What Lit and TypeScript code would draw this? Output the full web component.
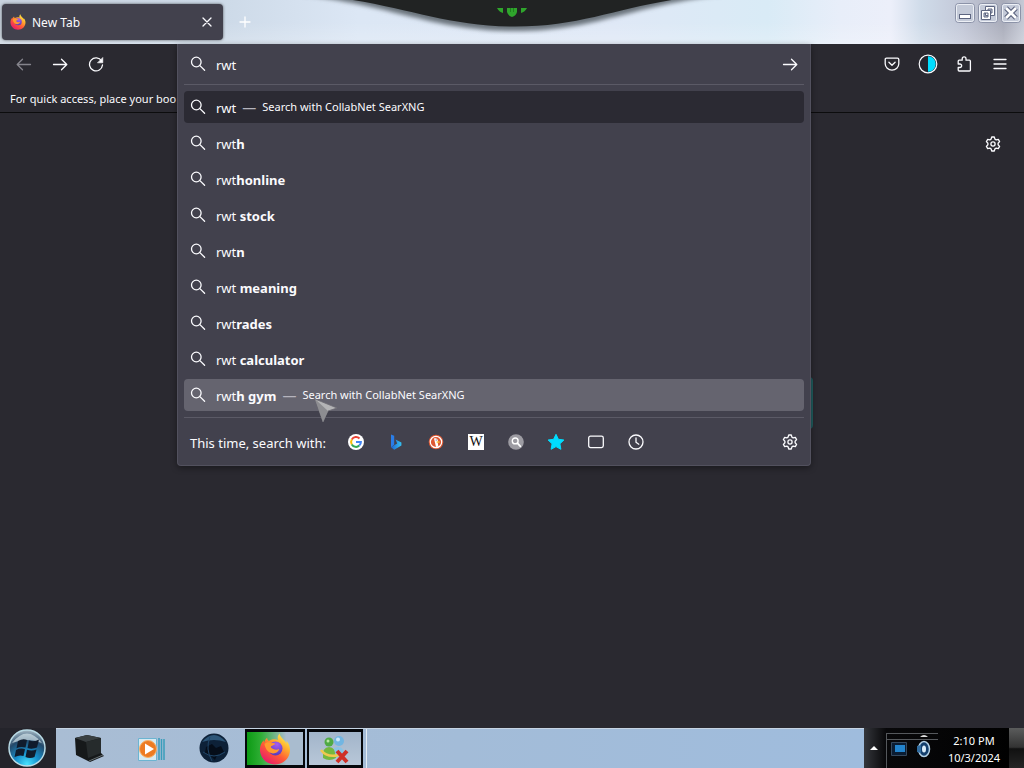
import { LitElement, html, svg, css } from "lit";
import { customElement, property, state } from "lit/decorators.js";
import { classMap } from "lit/directives/class-map.js";

const FONT = css`"Noto Sans", "Open Sans", sans-serif`;

const resetButton = css`
  *, *::before, *::after { box-sizing: border-box; }
  svg { display: block; flex: none; }
  button {
    font: inherit;
    color: inherit;
    background: none;
    border: 0;
    padding: 0;
    margin: 0;
    display: flex;
    align-items: center;
    justify-content: center;
  }
`;

const line = (body: unknown, size = 16) => html`
  <svg width=${size} height=${size} viewBox="0 0 16 16" fill="none" stroke="currentColor"
    stroke-width="1.3" stroke-linecap="round" stroke-linejoin="round" aria-hidden="true">${body}</svg>`;

const searchIcon = line(svg`<circle cx="6.3" cy="6" r="4.8"/><path d="M9.9 9.6 14.6 14.3"/>`);
const arrowRight = line(svg`<path d="M1.500 8.500h13M9.500 3.200l5.300 5.300-5.300 5.300"/>`);
const arrowLeft = line(svg`<path d="M14.500 8.500h-13M6.500 3.200 1.200 8.500l5.300 5.300"/>`);
const reload = line(svg`<path d="M13.600 5A6.500 6.500 0 1 0 14.500 9"/><path d="M14.800 1.800v5h-5z" fill="currentColor" stroke-width=".6"/>`);
const closeIcon = line(svg`<path d="M4 4l8 8M12 4l-8 8"/>`);
const plus = line(svg`<path d="M8 3v10M3 8h10"/>`);
const menuIcon = line(svg`<path d="M2 3.500h12M2 8h12M2 12.500h12"/>`);
const pocket = line(svg`<path d="M2.500 2.200h11q1.300 0 1.300 1.300v4.300a6.800 6.300 0 0 1-13.600 0V3.500q0-1.300 1.300-1.300z"/><path d="M4.900 6.300 8 9.300l3.100-3"/>`);
const puzzle = line(svg`<path d="M6.200 4.200V2.700a1.900 1.900 0 0 1 3.800 0v1.500h3.400q1 0 1 1v8.800q0 1-1 1H3.200q-1 0-1-1v-2.500h1.700a1.750 1.750 0 0 0 0-3.500H2.200V5.200q0-1 1-1z"/>`);
const gear = line(svg`<circle cx="8" cy="8" r="2.100"/><path d="M6.700 1h2.600l.6 2.100 1.300.8 2.100-.5 1.300 2.200-1.500 1.600v1.600l1.500 1.600-1.300 2.200-2.100-.5-1.300.8L9.300 15H6.700l-.6-2.100-1.300-.8-2.100.5-1.300-2.200 1.500-1.600V7.200L1.400 5.600l1.300-2.200 2.100.5 1.300-.8z"/>`);
const tabsIcon = line(svg`<rect x=".700" y="2.200" width="14.600" height="11.400" rx="1.800"/>`);
const clock = line(svg`<circle cx="8" cy="8" r="7"/><path d="M8 4v4.300l2.800 1.900"/>`);
const darkMode = html`
  <svg width="20" height="20" viewBox="0 0 20 20" aria-hidden="true">
    <circle cx="10" cy="10" r="8.800" fill="#24252e" stroke="#fbfbfe" stroke-width="1.200"/>
    <path d="M10 2.300a7.700 7.700 0 0 1 0 15.400z" fill="#00ddff"/>
  </svg>`;

const firefox = (size: number) => html`
  <svg width=${size} height=${size} viewBox="0 0 32 32" aria-hidden="true">
    <defs>
      <linearGradient id="ff" x1=".85" y1=".05" x2=".2" y2=".95">
        <stop offset="0" stop-color="#fff44f"/><stop offset=".3" stop-color="#ffb02e"/>
        <stop offset=".6" stop-color="#ff5b36"/><stop offset="1" stop-color="#e8186d"/>
      </linearGradient>
      <radialGradient id="fp" cx=".6" cy=".2" r=".9">
        <stop offset="0" stop-color="#a65cf0"/><stop offset="1" stop-color="#4737b8"/>
      </radialGradient>
    </defs>
    <path fill="url(#ff)" d="M20.500.5c-2 2.500-2.200 4.700-1.300 6.500-3.500-1.300-7-.8-9.200 1-1.500-.8-1.800-2-1.800-3.200C6.500 5.900 5.500 8 5.200 9.700 4.800 9.200 4.700 8.300 4.800 7.200 1.800 10 .6 14 1 18c.8 7.700 7.200 13.500 15 13.500 8.500 0 15-6.500 15-14.500 0-4-1.500-7-3.800-9.200.3 1 .4 2 .2 2.900C26 6.500 21.500 5.500 20.500.5z"/>
    <circle cx="16.500" cy="15.500" r="7" fill="url(#fp)"/>
    <path fill="#ff9a2e" d="M5.500 11c2-2.300 5-2.300 7-.8 1.800-.3 3 .1 3.800.6-1 1.700-4 1.500-4.500 3.400 2 2 5.500 3.500 8.500 1.500-1 4.500-7 6.500-11.300 2.600C7 16.300 5.800 13.500 5.500 11z"/>
  </svg>`;

const engineIcons = {
  google: html`<svg width="16" height="16" viewBox="0 0 16 16" aria-hidden="true">
    <circle cx="8" cy="8" r="8" fill="#fff"/>
    <g fill="none" stroke-width="2"><path stroke="#ea4335" d="M3.800 5.500A4.900 4.900 0 0 1 11.500 4.500"/>
    <path stroke="#fbbc05" d="M3.800 10.500a4.900 4.900 0 0 1 0-5"/><path stroke="#34a853" d="M11.300 11.600a4.900 4.900 0 0 1-7.500-1.100"/>
    <path stroke="#4285f4" d="M8 8h4.900a4.900 4.900 0 0 1-1.600 3.600"/></g></svg>`,
  bing: html`<svg width="16" height="16" viewBox="0 0 16 16" aria-hidden="true">
    <defs><linearGradient id="bg" x1="0" y1="0" x2="1" y2="0"><stop offset="0" stop-color="#1b62d0"/><stop offset="1" stop-color="#35c1f1"/></linearGradient></defs>
    <path fill="#2a7de8" d="M3 .5 6.200 1.700v9.100L3 13.200z"/><path fill="url(#bg)" d="M3 13.200 7.400 10.500 9.200 9.600 7.500 5.600l5.900 2.800v3.200L6.200 15.700z"/></svg>`,
  duck: html`<svg width="16" height="16" viewBox="0 0 16 16" aria-hidden="true">
    <circle cx="8" cy="8" r="7.300" fill="#de5833"/><circle cx="8" cy="8" r="5.700" fill="none" stroke="#fff" stroke-width="1.200"/>
    <path fill="#fff" d="M6 4.600c1.800-1 4 .2 4 2.600L9.600 8l.8 4.600-2.400.5z"/><path fill="#fc3" d="M8.600 7.400h3v1.300h-3z"/><circle cx="8.200" cy="6" r=".6" fill="#2d4f8e"/></svg>`,
  wiki: html`<span class="wiki" aria-hidden="true">W</span>`,
  searx: html`<svg width="16" height="16" viewBox="0 0 16 16" aria-hidden="true">
    <circle cx="8" cy="8" r="7.800" fill="#9d9ca3"/><circle cx="7.200" cy="6.900" r="2.900" fill="none" stroke="#fff" stroke-width="1.400"/>
    <path d="m9.400 9.200 3 3.100" stroke="#fff" stroke-width="1.700" stroke-linecap="round"/></svg>`,
  star: html`<svg width="18" height="18" viewBox="0 0 18 18" aria-hidden="true">
    <path fill="#00ddff" stroke="#00ddff" stroke-linejoin="round" d="m9 1.300 2.400 5 5.500.7-4 3.800 1 5.500L9 13.600l-4.900 2.700 1-5.500-4-3.800 5.500-.7z"/></svg>`,
  tabs: tabsIcon,
  clock,
};

interface Suggestion { typed: string; rest: string; action?: boolean }

const SUGGESTIONS: Suggestion[] = [
  { typed: "rwt", rest: "", action: true },
  { typed: "rwt", rest: "h" },
  { typed: "rwt", rest: "honline" },
  { typed: "rwt", rest: " stock" },
  { typed: "rwt", rest: "n" },
  { typed: "rwt", rest: " meaning" },
  { typed: "rwt", rest: "rades" },
  { typed: "rwt", rest: " calculator" },
  { typed: "rwt", rest: "h gym", action: true },
];

@customElement("title-bar")
export class TitleBar extends LitElement {
  static styles = [resetButton, css`
    :host {
      display: flex;
      position: relative;
      align-items: flex-start;
      height: 44px;
      padding: 4px 2px 0 2px;
      font: 12px/16px ${FONT};
      color: #fbfbfe;
      background:
        linear-gradient(#fff0 50%, #ffffff33),
        linear-gradient(90deg, #c9d3df 0, #cddae8 22%, #dce7f5 35%, #dfe8f6 60%, #d9ebf6 75%, #e8eef9 82%, #eceffa 87%, #cfdbe9 90%, #c3c8d8 94%, #a9acba 98%, #c6cad6);
      overflow: hidden;
    }
    .tab {
      display: flex;
      align-items: center;
      gap: 6px;
      width: 221px;
      height: 36px;
      padding: 0 8px;
      border-radius: 4px;
      background: #42414d;
      box-shadow: 0 0 3px #0009;
    }
    .label { flex: 1; padding-top: 2px; }
    .new { width: 44px; height: 36px; color: #fff; }
    .wave { position: absolute; top: 0; left: 50%; transform: translateX(-50%); }
    .controls { display: flex; gap: 3px; margin: -1px 1px 0 auto; }
  `];
  private win(label: string, body: unknown) {
    return html`<button aria-label=${label}>
      <svg width="20" height="20" viewBox="0 0 20 20">
        <rect x=".5" y=".5" width="19" height="19" rx="3" fill="#c4cad8" stroke="#8c93a8"/>
        <rect x="1.500" y="1.500" width="17" height="17" rx="2" fill="none" stroke="#edf0f6"/>
        ${body}
      </svg></button>`;
  }
  render() {
    return html`
      <div class="tab">
        ${firefox(16)}
        <span class="label">New Tab</span>
        <button aria-label="Close tab">${closeIcon}</button>
      </div>
      <button class="new" aria-label="New tab">${plus}</button>
      <svg class="wave" width="420" height="40" viewBox="0 0 420 40" aria-hidden="true">
        <defs><filter id="soft"><feGaussianBlur stdDeviation="2"/></filter></defs>
        <path filter="url(#soft)" fill="#6b737c" d="M-10-6C90 4 130 31 213 31S330 4 430-6z"/>
        <path fill="#212323" d="M20-4C100 4 140 26.500 213 26.500S320 4 400-4z"/>
        <path fill="#2fa52c" d="M205 8h10v4q-1 4-5 5-4-1-5-5zM195 8h6v5q-4-1-6-5zM219 8h6q-2 4-6 5z"/>
        <path stroke="#228020" d="M208.500 8v4M211.500 8v4"/>
      </svg>
      <div class="controls">
        ${this.win("Minimize", svg`<rect x="4.500" y="11.500" width="11" height="4" fill="#fff" stroke="#5d6580"/>`)}
        ${this.win("Restore", svg`<g fill="#fff" stroke="#5d6580"><path fill-rule="evenodd" d="M7.500 3.500h9v9h-9zM10 6v4h4V6z"/><path fill-rule="evenodd" d="M3.500 7.500h9v9h-9zM6 10v4h4v-4z"/></g>`)}
        ${this.win("Close", svg`<path stroke="#5d6580" stroke-width="5" d="m5 5 10 10M15 5 5 15"/><path stroke="#fff" stroke-width="2.600" d="m5 5 10 10M15 5 5 15"/>`)}
      </div>`;
  }
}

@customElement("url-panel")
export class UrlPanel extends LitElement {
  @property() value = "rwt";
  @state() private hovered = 8;
  static styles = [resetButton, css`
    :host {
      display: block;
      padding: 0 6px;
      font: 13px/20px ${FONT};
      color: #fbfbfe;
      background: #42414d;
      border: 1px solid #52515e;
      border-top: 0;
      border-radius: 0 0 4px 4px;
      box-shadow: 0 2px 6px #0006;
    }
    .field {
      display: flex;
      align-items: center;
      gap: 10px;
      height: 41px;
      padding: 0 6px;
      border-bottom: 1px solid #5b5a66;
    }
    input {
      flex: 1;
      min-width: 0;
      font: 13px/20px ${FONT};
      color: inherit;
      background: none;
      border: 0;
      padding: 2px 0 0;
      outline: 0;
    }
    ul {
      display: flex;
      flex-direction: column;
      gap: 4px;
      margin: 0;
      padding: 6px 0;
      list-style: none;
      border-bottom: 1px solid #5b5a66;
    }
    .row {
      width: 100%;
      height: 32px;
      padding: 0 6px;
      gap: 10px;
      justify-content: flex-start;
      border-radius: 4px;
      white-space: pre;
      text-align: left;
    }
    .text { display: flex; align-items: center; padding-top: 2px; }
    .default { background: #2b2a33; }
    .hover { background: #65646f; }
    .dash { color: #b5b4bd; font-size: 14px; margin: 0 6px; }
    .action { font-size: 11px; line-height: 16px; padding-bottom: 2px; }
    .engines { display: flex; align-items: center; height: 47px; padding: 0 6px; }
    .list { display: flex; margin-left: 10px; }
    .list button { width: 40px; height: 32px; }
    .engines > button { margin-left: auto; }
    .wiki {
      width: 16px;
      height: 16px;
      background: #fff;
      color: #111;
      font: 14px/16px "Liberation Serif", serif;
      text-align: center;
    }
  `];
  render() {
    const names = ["Google", "Bing", "DuckDuckGo", "Wikipedia", "SearXNG", "Bookmarks", "Tabs", "History"];
    return html`
      <div class="field">
        ${searchIcon}
        <input aria-label="Search or enter address" .value=${this.value}>
        <button aria-label="Go">${arrowRight}</button>
      </div>
      <ul>
        ${SUGGESTIONS.map((s, i) => html`<li>
          <button class=${classMap({ row: true, default: i === 0, hover: i === this.hovered })}
            @mouseenter=${() => { this.hovered = i; }}
            >${searchIcon}<span class="text"><span>${s.typed}<b>${s.rest}</b></span>${s.action
              ? html`<span class="dash">—</span><span class="action">Search with CollabNet SearXNG</span>` : ""}</span></button>
        </li>`)}
      </ul>
      <div class="engines">
        <span class="text">This time, search with:</span>
        <div class="list">
          ${Object.values(engineIcons).map((icon, i) => html`<button aria-label=${names[i]}>${icon}</button>`)}
        </div>
        <button aria-label="Search settings">${gear}</button>
      </div>`;
  }
}

@customElement("task-bar")
export class TaskBar extends LitElement {
  static styles = [resetButton, css`
    :host {
      display: flex;
      height: 40px;
      font: 11px/17px ${FONT};
      color: #fff;
      background: #24242b;
    }
    .start { width: 56px; }
    .apps {
      flex: 1;
      display: flex;
      background: linear-gradient(90deg, #a9bdd4, #a3bcd8 50%, #9fbcdd);
      border-top: 1px solid #c6d4e3;
    }
    .apps button { width: 63px; }
    .apps .open {
      width: 60px;
      border: solid #05070b;
      border-width: 3px 2px;
      background: linear-gradient(#a2b5ca, #b8c7d8);
    }
    .apps .chat { width: 56px; margin: 0 3px 0 2px; }
    .apps .active { background: linear-gradient(90deg, #0c9b14, #2fae35 25%, #a9bccf 70%); }
    .edge { width: 2px; border-left: 1px solid #e5edf6; }
    .tray {
      display: flex;
      align-items: center;
      background: linear-gradient(90deg, #34363b, #08080a 22px, #000);
    }
    .more { width: 20px; height: 40px; }
    .clock { width: 70px; padding-top: 2px; text-align: center; }
    .desk { width: 15px; height: 40px; background: linear-gradient(#5b5c5c, #333 48%, #111 52%, #252525); }
  `];
  render() {
    return html`
      <button class="start" aria-label="Start">
        <svg width="40" height="40" viewBox="0 0 40 40">
          <defs><radialGradient id="orb" cx=".5" cy=".95" r=".95"><stop offset="0" stop-color="#48e3ff"/><stop offset=".35" stop-color="#168ecb"/><stop offset=".7" stop-color="#24496a"/><stop offset="1" stop-color="#a9bcc7"/></radialGradient></defs>
          <circle cx="19" cy="20" r="18" fill="url(#orb)" stroke="#b9dbe6" stroke-width="1.500"/>
          <path d="M4 15Q19-4 34 15 19 9 4 15z" fill="#dcebf0" opacity=".65"/>
          <path fill="#101b2c" d="M10 13q5-3 9-1l-1.500 7.500q-5-1.500-9 .8zM21 12.500q5 2 10-1l-2 8q-5 2-9.500.5zM8 22q5-2.500 9-.7L15.500 28q-4-1.500-9 1zM19 21.800q5 1.700 9.500-.4l-2 7.500q-4 2-9 .2z"/>
        </svg>
      </button>
      <div class="apps">
        <button aria-label="Computer">
          <svg width="32" height="32" viewBox="0 0 32 32"><path fill="#16191a" d="m3 5 12-3 14 3v15l3 3-14 6L4 22z"/><path fill="#3a4042" d="m3 5 12-3 14 3-15 4z"/><path fill="#262b2c" d="m14 9 15-4v15l-13 5z"/><path stroke="#687174" d="m17 28 14-6"/></svg>
        </button>
        <button aria-label="Media Player">
          <svg width="28" height="28" viewBox="0 0 28 28"><path fill="#d7eaf2" stroke="#6cb4d1" d="M1.500 3.500h18v22h-18z"/><path stroke="#3a9dbb" stroke-width="1.500" d="M22 3v22M24.500 4v21M27 4v21"/><circle cx="11" cy="14" r="8.500" fill="#ed7b22" stroke="#f7b169"/><path fill="#fff" d="m8 8.500 9 5.500-9 5.500z"/></svg>
        </button>
        <button aria-label="Globe">
          <svg width="32" height="32" viewBox="0 0 32 32"><circle cx="16" cy="15" r="14.500" fill="#0d2138"/><path fill="#2c5577" d="M4 9Q16-5 28 9q-12-4-24 0z"/><path fill="#050d19" d="m8 14 6-3 4 4 5-2 3 6-7 3-2 5-5-5-5-2z"/><path fill="none" stroke="#1f4568" d="M5 19q11 8 22 0M12 4q-5 12 2 24"/></svg>
        </button>
        <button class="open active" aria-label="Firefox">${firefox(32)}</button>
        <button class="open chat" aria-label="Messenger">
          <svg width="30" height="30" viewBox="0 0 30 30"><circle cx="9" cy="8" r="4.500" fill="#4faa44"/><circle cx="19" cy="7" r="5" fill="#72b6e2"/><circle cx="8" cy="7" r="1.500" fill="#b9e6a5"/><circle cx="18" cy="5.500" r="2" fill="#cfe9fa"/><path fill="#74b83f" d="M3 24q-1-11 6-11t7 11q-7 4-13 0z"/><path fill="#8ac3e6" d="M14 14q9-4 11 7l-9 3z"/><path d="M1 16q6 8 18 5" fill="none" stroke="#f1c84e" stroke-width="2.500"/><path stroke="#cf2f27" stroke-width="4" d="m17 17 10 11M27 17 17 28"/></svg>
        </button>
        <span class="edge"></span>
      </div>
      <div class="tray">
        <button class="more" aria-label="Show hidden icons"><svg width="10" height="6" viewBox="0 0 10 6"><path fill="#fff" d="m5 1 4 4H1z"/></svg></button>
        <svg width="55" height="40" viewBox="0 0 55 40" aria-hidden="true">
          <path stroke="#55585c" d="M2.500 5v35M3 5.500h51M3 11.500h51"/>
          <path fill="#0b1d33" stroke="#35485d" d="M7.500 14.500h15v13h-15z"/><path fill="#2384cd" d="M11 17h10v7H11z"/>
          <path fill="#ddd" d="M36 9q4-4 8 0z"/>
          <ellipse cx="40" cy="21" rx="5.500" ry="7.500" fill="#143f6d" stroke="#b5d2e6" stroke-width="1.500"/><ellipse cx="40" cy="21" rx="2" ry="3.500" fill="#dbeefa"/><path fill="#306b9e" d="m33 18 4-1v8l-4-1z"/>
        </svg>
        <time class="clock">2:10 PM<br>10/3/2024</time>
        <button class="desk" aria-label="Show desktop"></button>
      </div>`;
  }
}

@customElement("app-root")
export class AppRoot extends LitElement {
  static styles = [resetButton, css`
    :host {
      display: flex;
      flex-direction: column;
      min-height: 100vh;
      font: 11px/16px ${FONT};
      color: #fbfbfe;
      background: #2a2930;
      overflow: hidden;
    }
    .chrome {
      position: relative;
      display: grid;
      grid-template-columns: 177px 1fr 213px;
      grid-template-rows: 40px 28px;
      border-bottom: 1px solid #0c0c0d;
    }
    .nav { display: flex; align-items: center; padding-left: 6px; }
    .nav button, .tools button { width: 36px; height: 32px; }
    .nav .off { color: #85848c; }
    .anchor { position: relative; grid-row: span 2; z-index: 1; }
    .anchor url-panel { position: absolute; top: 0; left: 0; right: 0; }
    .tools { display: flex; align-items: center; justify-content: flex-end; padding-right: 6px; }
    .hint { padding: 7px 0 0 10px; white-space: nowrap; }
    main { position: relative; flex: 1; display: flex; justify-content: flex-end; align-items: flex-start; padding: 23px 23px 0 0; }
    .glow { position: absolute; top: 264px; right: 211px; width: 12px; height: 52px; border: 2px solid #1f5c5e; border-radius: 4px; }
    .pointer { position: absolute; top: 353px; left: 136px; z-index: 2; pointer-events: none; }
  `];
  render() {
    return html`
      <title-bar></title-bar>
      <div class="chrome">
        <div class="nav">
          <button class="off" aria-label="Back" disabled>${arrowLeft}</button>
          <button aria-label="Forward">${arrowRight}</button>
          <button aria-label="Reload">${reload}</button>
        </div>
        <div class="anchor">
          <url-panel></url-panel>
          <svg class="pointer" width="28" height="28" viewBox="0 0 28 28" aria-hidden="true">
            <path fill="#b4b4b6" stroke="#6c6b72" stroke-width=".8" d="m2 2 22 9-9 3-5 11z"/>
            <path fill="#8d8d91" d="m2 2 13 12-5 11z"/>
          </svg>
        </div>
        <div class="tools">
          <button aria-label="Save to Pocket">${pocket}</button>
          <button aria-label="Dark mode">${darkMode}</button>
          <button aria-label="Extensions">${puzzle}</button>
          <button aria-label="Menu">${menuIcon}</button>
        </div>
        <div class="hint">For quick access, place your boo</div>
      </div>
      <main>
        <span class="glow"></span>
        <button aria-label="Personalize new tab">${gear}</button>
      </main>
      <task-bar></task-bar>`;
  }
}
